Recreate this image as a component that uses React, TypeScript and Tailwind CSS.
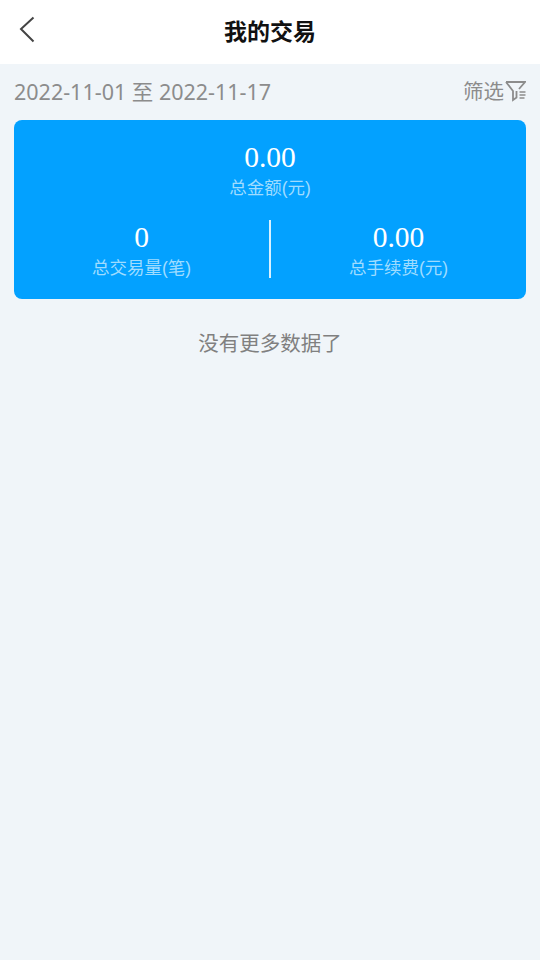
export default function App() {
  const cjk = "font-['Liberation_Sans','Noto_Sans_CJK_SC',sans-serif]";
  const label = `mt-[4px] text-[17.5px] leading-[20px] text-[#9fdcff] ${cjk}`;
  const num = "text-[29.5px] leading-[34px] text-white font-['Liberation_Serif','Noto_Sans_CJK_SC',serif]";
  return (
    <div className={`w-[540px] h-[960px] bg-[#f0f5f9] flex flex-col ${cjk}`}>
      <header className="relative h-[64px] bg-white flex items-center justify-center">
        <svg className="absolute left-[18px] top-[15px]" width="20" height="30" viewBox="0 0 20 30" fill="none">
          <path d="M15.5 2.5 L3 14 L15.5 26.5" stroke="#444" strokeWidth="2" />
        </svg>
        <span className="text-[23px] font-bold text-[#111]">我的交易</span>
      </header>
      <div className="h-[56px] px-[14px] flex items-center justify-between">
        <span className="text-[21.5px] text-[#8c8c8c] font-['Noto_Sans','Noto_Sans_CJK_SC',sans-serif]">2022-11-01 至 2022-11-17</span>
        <div className="flex items-center">
          <span className="text-[20.5px] text-[#8c8c8c] mr-[1px] mt-[1px]">筛选</span>
          <svg className="mb-[3px]" width="21" height="22" viewBox="0 0 21 22" fill="none" stroke="#8c8c8c" strokeWidth="1.8">
            <path d="M1 2 H20 L14 9" />
            <path d="M1 2 L8 11 V20 L11.5 17.5 V11" />
            <path d="M14.5 12 H20.5 M14.5 15 H20.5 M14.5 18 H19.5" strokeWidth="1.3" />
          </svg>
        </div>
      </div>
      <section className="mx-[14px] h-[179px] rounded-[8px] bg-[#03a1ff] flex flex-col">
        <div className="flex flex-col items-center pt-[20px]">
          <div className={num}>0.00</div>
          <div className={label}>总金额(元)</div>
        </div>
        <div className="flex items-center mt-[22px]">
          <div className="flex-1 flex flex-col items-center">
            <div className={num}>0</div>
            <div className={label}>总交易量(笔)</div>
          </div>
          <div className="w-[2px] h-[58px] bg-[#d8f1ff]" />
          <div className="flex-1 flex flex-col items-center">
            <div className={num}>0.00</div>
            <div className={label}>总手续费(元)</div>
          </div>
        </div>
      </section>
      <div className="mt-[30px] text-center text-[20.5px] leading-[30px] text-[#808080]">没有更多数据了</div>
    </div>
  );
}
